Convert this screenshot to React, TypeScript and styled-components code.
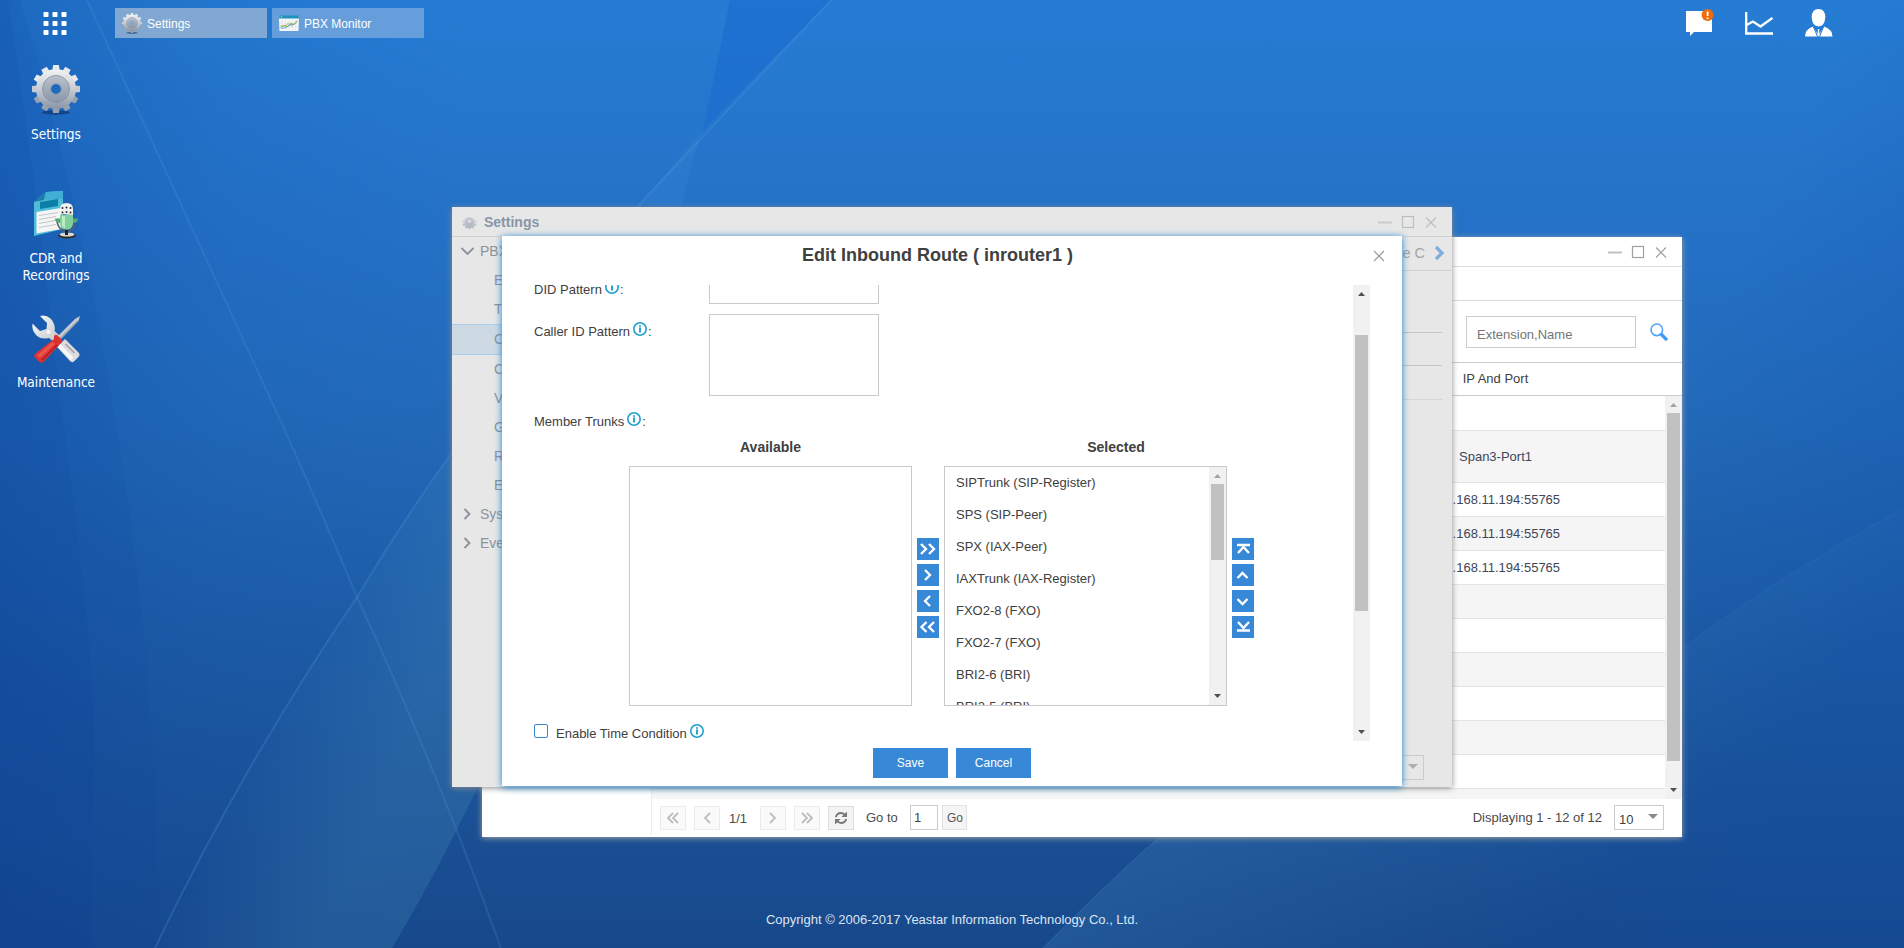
import React from "react";
import styled, { createGlobalStyle, css } from "styled-components";

const GlobalStyle = createGlobalStyle`
  * { box-sizing: border-box; }
  html, body { margin: 0; padding: 0; height: 100%; overflow: hidden; }
  body { font: 13px "Liberation Sans", Arial, sans-serif; color: #404040; }
`;

/* ---------- desktop ---------- */

const Desktop = styled.div`
  position: relative;
  width: 1904px;
  height: 948px;
  overflow: hidden;
  display: flex;
  flex-direction: column;
  background: #1e62b2;
`;

const Wallpaper = styled.svg`
  position: absolute;
  inset: 0;
`;

const TaskBar = styled.header`
  position: relative;
  display: flex;
  align-items: flex-start;
  height: 38px;
  padding: 8px 71px 0 43px;
`;

const AppsIcon = styled.svg`
  margin: 4px 48px 0 0;
`;

const Task = styled.div<{ $active?: boolean }>`
  display: flex;
  align-items: center;
  width: 152px;
  height: 30px;
  margin-right: 5px;
  padding: 1px 0 0 7px;
  gap: 5px;
  font-size: 12px;
  color: #fff;
  background: ${(p) => (p.$active ? "#80a8d2" : "#669edb")};
`;

const Tray = styled.div`
  display: flex;
  gap: 32px;
  margin-left: auto;
`;

const Shortcuts = styled.nav`
  position: relative;
  display: flex;
  flex-direction: column;
  width: 112px;
  padding-top: 27px;
  flex: 1;
`;

const Shortcut = styled.div`
  display: flex;
  flex-direction: column;
  align-items: center;
  height: 124px;
  color: #fff;
  text-align: center;
  font: 13.5px/17px "DejaVu Sans Condensed", "DejaVu Sans", sans-serif;
`;

const ShortcutLabel = styled.span`
  width: 92px;
  margin-top: 11px;
`;

const Copyright = styled.footer`
  position: relative;
  height: 58px;
  line-height: 60px;
  text-align: center;
  color: #dbe5f1;
`;

/* ---------- windows ---------- */

const Frame = styled.section<{ $x: number; $y: number; $w: number; $h: number; $muted?: boolean }>`
  position: absolute;
  left: ${(p) => p.$x}px;
  top: ${(p) => p.$y}px;
  width: ${(p) => p.$w}px;
  height: ${(p) => p.$h}px;
  display: flex;
  flex-direction: column;
  background: ${(p) => (p.$muted ? "#e7e7e7" : "#fff")};
  box-shadow: 0 1px 6px ${(p) => (p.$muted ? "#8b8b8b" : "#a2a2a2")};
`;

const TitleBar = styled.div<{ $muted?: boolean }>`
  display: flex;
  align-items: center;
  height: 30px;
  padding: 0 15px 0 10px;
  border-bottom: 1px solid ${(p) => (p.$muted ? "#d0d0d0" : "#dcdcdc")};
  flex: none;
`;

const TitleText = styled.b`
  margin-left: 7px;
  font-size: 14px;
  color: #8795a8;
`;

const Controls = styled.svg`
  margin-left: auto;
`;

const WindowBody = styled.div`
  display: flex;
  flex: 1;
  min-height: 0;
`;

/* PBX monitor */

const MonitorNav = styled.div`
  width: 170px;
  margin-bottom: 2px;
  border-right: 1px solid #ececec;
`;

const MonitorMain = styled.div`
  display: flex;
  flex-direction: column;
  flex: 1;
`;

const TabStrip = styled.div`
  height: 34px;
  border-bottom: 1px solid #dcdcdc;
`;

const SearchBar = styled.div`
  display: flex;
  justify-content: flex-end;
  height: 62px;
  padding: 15px 14px 0 0;
  gap: 14px;
  border-bottom: 1px solid #ccc;
`;

const SearchInput = styled.div`
  width: 170px;
  height: 32px;
  padding: 2px 0 0 10px;
  border: 1px solid #ccc;
  line-height: 32px;
  color: #757575;
`;

const SearchIcon = styled.svg`
  margin-top: 7px;
`;

const ColumnHeader = styled.div`
  height: 33px;
  padding: 0 17px 1px 0;
  border-bottom: 1px solid #ccc;
  display: flex;
  justify-content: flex-end;
  align-items: center;
`;

const Grid = styled.div`
  display: flex;
  height: 403px;
`;

const GridRows = styled.div`
  flex: 1;
  overflow: hidden;
`;

const GridRow = styled.div<{ $h: number; $alt: boolean }>`
  display: flex;
  justify-content: flex-end;
  align-items: center;
  height: ${(p) => p.$h}px;
  border-bottom: 1px solid #e3e3e3;
  background: ${(p) => (p.$alt ? "#f5f5f5" : "#fff")};
  color: #3e4659;
`;

const PortCell = styled.span`
  width: 339px;
  text-align: center;
`;

const Pager = styled.div`
  display: flex;
  align-items: flex-start;
  height: 38px;
  padding: 7px 18px 0 8px;
`;

const PagerButton = styled.span<{ $enabled?: boolean }>`
  display: flex;
  align-items: center;
  justify-content: center;
  width: 26px;
  height: 24px;
  margin-right: 8px;
  border: 1px solid ${(p) => (p.$enabled ? "#ddd" : "#ececec")};
  background: ${(p) => (p.$enabled ? "#f3f3f3" : "#fafafa")};
`;

const PagerText = styled.span<{ $w: number; $top?: number; $left?: number }>`
  width: ${(p) => p.$w}px;
  padding-top: ${(p) => p.$top ?? 0}px;
  padding-left: ${(p) => p.$left ?? 0}px;
  line-height: 24px;
  white-space: nowrap;
  color: #4a4a4a;
`;

const PageInput = styled.span`
  width: 28px;
  height: 25px;
  margin: -1px 4px 0 0;
  padding-left: 3px;
  border: 1px solid #ccc;
  line-height: 24px;
`;

const GoButton = styled.span`
  width: 25px;
  height: 25px;
  margin-top: -1px;
  padding-left: 1px;
  border: 1px solid #e3e3e3;
  background: #f5f5f5;
  font-size: 12px;
  line-height: 25px;
  text-align: center;
  color: #555;
`;

const PageTotal = styled.span`
  margin-left: auto;
  margin-right: 12px;
  line-height: 23px;
  color: #4a4a4a;
`;

const PageSize = styled.span`
  display: flex;
  justify-content: space-between;
  width: 50px;
  height: 25px;
  margin-top: -1px;
  padding: 0 4px;
  border: 1px solid #ccc;
  line-height: 27px;
`;

const Caret = styled.i<{ $muted?: boolean }>`
  margin: 8px 1px 0 auto;
  width: 10px;
  height: 5px;
  background: ${(p) => (p.$muted ? "#b0b0b0" : "#8a8a8a")};
  clip-path: polygon(0 0, 100% 0, 50% 100%);
`;

/* settings window */

const MenuTree = styled.nav`
  width: 200px;
`;

const MenuItem = styled.div<{ $level: number; $active?: boolean }>`
  display: flex;
  align-items: center;
  height: ${(p) => (p.$active ? 31 : 29)}px;
  padding-left: ${(p) => (p.$level ? 42 : 8)}px;
  padding-bottom: 2px;
  font-size: 14px;
  color: #8d929b;
  ${(p) =>
    p.$active &&
    css`
      background: #cddae4;
      border-top: 1px solid #a9cde9;
      border-bottom: 1px solid #a9cde9;
    `}
`;

const MenuArrow = styled.svg`
  margin-right: 5px;
`;

const SettingsMain = styled.div`
  flex: 1;
  display: flex;
  flex-direction: column;
`;

const SettingsTabs = styled.div`
  display: flex;
  justify-content: flex-end;
  align-items: center;
  height: 34px;
  padding: 0 7px 1px 0;
  border-bottom: 1px solid #d0d0d0;
  font-size: 14.5px;
  color: #a3a3a3;
`;

const TabChevron = styled.svg`
  margin-left: 9px;
`;

const SettingsRule = styled.div<{ $h: number; $light?: boolean }>`
  height: ${(p) => p.$h}px;
  margin-right: 10px;
  border-bottom: 1px solid ${(p) => (p.$light ? "#d6d6d6" : "#c6c6c6")};
`;

const SettingsFooter = styled.div`
  display: flex;
  justify-content: flex-end;
  margin-top: auto;
  padding: 0 28px 7px 0;
`;

/* dialog */

const Dialog = styled.section`
  position: absolute;
  left: 502px;
  top: 236px;
  width: 900px;
  height: 550px;
  display: flex;
  flex-direction: column;
  background: #fff;
  box-shadow: 0 1px 7px #1b80cc;
`;

const DialogHeader = styled.header`
  display: flex;
  height: 49px;
  padding-right: 17px;
  flex: none;
`;

const DialogTitle = styled.h1`
  flex: 1;
  margin: 0;
  font-size: 18px;
  line-height: 39px;
  text-align: center;
  color: #404040;
`;

const DialogBody = styled.div`
  display: flex;
  height: 456px;
  padding: 0 32px;
  overflow: hidden;
`;

const Form = styled.div`
  flex: 1;
  margin-top: -13px;
`;

const Field = styled.div<{ $gap: number }>`
  display: flex;
  align-items: flex-start;
  margin-bottom: ${(p) => p.$gap}px;
`;

const Label = styled.label`
  width: 175px;
  height: 35px;
  line-height: 35px;
  white-space: nowrap;
`;

const InfoSvg = styled.svg`
  margin: 0 1px 0 3px;
  vertical-align: baseline;
`;

const TextBox = styled.div<{ $h: number }>`
  width: 170px;
  height: ${(p) => p.$h}px;
  border: 1px solid #c9c9c9;
`;

const ListTitles = styled.div`
  display: flex;
  gap: 32px;
  padding-left: 95px;
  margin-bottom: 11px;
`;

const ListTitle = styled.b<{ $w: number }>`
  width: ${(p) => p.$w}px;
  font-size: 14px;
  line-height: 16px;
  text-align: center;
`;

const Transfer = styled.div`
  display: flex;
  gap: 5px;
  padding-left: 95px;
  margin-bottom: 10px;
`;

const ListBox = styled.div`
  display: flex;
  width: 283px;
  height: 240px;
  border: 1px solid #c9c9c9;
`;

const ListItems = styled.div`
  flex: 1;
  overflow: hidden;
`;

const ListItem = styled.div`
  height: 32px;
  padding-left: 11px;
  line-height: 32px;
`;

const MoveColumn = styled.div`
  display: flex;
  flex-direction: column;
  gap: 4px;
  padding-top: 72px;
`;

const MoveButton = styled.span`
  width: 22px;
  height: 22px;
  background: #3789d8;

  svg {
    display: block;
  }
`;

const CheckBox = styled.i`
  display: inline-block;
  width: 14px;
  height: 14px;
  margin-right: 8px;
  border: 1px solid #3789d8;
  border-radius: 2px;
  vertical-align: baseline;
`;

const DialogFooter = styled.footer`
  display: flex;
  justify-content: center;
  gap: 8px;
  padding-top: 7px;
`;

const Button = styled.button`
  width: 75px;
  height: 30px;
  padding: 0;
  border: 0;
  font: 12px "Liberation Sans", Arial, sans-serif;
  color: #fff;
  background: #3789d8;
`;

/* scroll bar */

const Track = styled.div`
  display: flex;
  flex-direction: column;
  width: 17px;
  flex: none;
  background: #f1f1f1;
`;

const TrackArrow = styled.i<{ $down?: boolean; $idle?: boolean }>`
  width: 7px;
  height: 4px;
  margin: ${(p) => (p.$down ? "auto 5px 7px" : "7px 5px 6px")};
  background: ${(p) => (p.$idle ? "#a3a3a3" : "#505050")};
  clip-path: ${(p) => (p.$down ? "polygon(0 0, 100% 0, 50% 100%)" : "polygon(0 100%, 100% 100%, 50% 0)")};
`;

const Thumb = styled.div<{ $start: number; $len: number }>`
  width: 13px;
  height: ${(p) => p.$len}px;
  margin: ${(p) => p.$start}px 2px 0;
  background: #c1c1c1;
`;

const ScrollBar = ({ start, len }: { start: number; len: number }) => (
  <Track>
    <TrackArrow $idle={start === 0} />
    <Thumb $start={start} $len={len} />
    <TrackArrow $down />
  </Track>
);

/* ---------- drawings ---------- */

const Background = () => (
  <Wallpaper width="1904" height="948" viewBox="0 0 1904 948">
    <defs>
      <linearGradient id="sky" x1="0" y1="0" x2="0" y2="1">
        <stop offset="0" stopColor="#267cd3" />
        <stop offset="0.22" stopColor="#2472c8" />
        <stop offset="0.45" stopColor="#2269b8" />
        <stop offset="0.68" stopColor="#1d5aa4" />
        <stop offset="0.88" stopColor="#1a4f94" />
        <stop offset="1" stopColor="#17488b" />
      </linearGradient>
      <linearGradient id="leftShade" x1="0" y1="0" x2="1" y2="0">
        <stop offset="0" stopColor="#0a4398" stopOpacity="0.34" />
        <stop offset="0.5" stopColor="#0f50a8" stopOpacity="0.12" />
        <stop offset="1" stopColor="#0f55b0" stopOpacity="0" />
      </linearGradient>
      <linearGradient id="beam" gradientUnits="userSpaceOnUse" x1="290" y1="650" x2="420" y2="705">
        <stop offset="0" stopColor="#4a93bd" stopOpacity="0.01" />
        <stop offset="1" stopColor="#4a93bd" stopOpacity="0.24" />
      </linearGradient>
      <linearGradient id="rightBeam" gradientUnits="userSpaceOnUse" x1="1250" y1="740" x2="1480" y2="1000">
        <stop offset="0" stopColor="#3f85bd" stopOpacity="0.26" />
        <stop offset="1" stopColor="#3f85bd" stopOpacity="0" />
      </linearGradient>
      <linearGradient id="edge" gradientUnits="userSpaceOnUse" x1="1660" y1="430" x2="1900" y2="540">
        <stop offset="0" stopColor="#0d4ea6" stopOpacity="0" />
        <stop offset="1" stopColor="#0d4ea6" stopOpacity="0.26" />
      </linearGradient>
    </defs>
    <rect width="1904" height="948" fill="url(#sky)" />
    <rect width="460" height="948" fill="url(#leftShade)" />
    <rect x="1400" width="504" height="948" fill="url(#edge)" />
    <path d="M0 0H8Q40 210 60 400Q95 650 95 760L89 948H0Z" fill="#0a3c98" fillOpacity="0.09" />
    <path d="M0 0H20Q80 200 112 400Q160 680 158 948H0Z" fill="#0a3c98" fillOpacity="0.08" />
    <path d="M730 0H831L703 130Q718 60 730 0Z" fill="#1868cf" fillOpacity="0.5" />
    <path d="M703 130L639 205H682Q690 165 703 130Z" fill="#3a8bd4" fillOpacity="0.22" />
    <path d="M448 458Q400 525 357 597Q240 770 155 948H392Q430 885 476 791V458Z" fill="url(#beam)" />
    <path d="M831 0L639 205L448 458Q400 525 357 597Q240 770 155 948" fill="none" stroke="#5aa0dd" strokeOpacity="0.24" strokeWidth="2" />
    <path d="M87 0L271 400Q310 485 357 597Q435 765 501 948" fill="none" stroke="#5aa0dd" strokeOpacity="0.2" strokeWidth="2" />
    <path d="M1904 508Q1790 570 1692 641Q1400 770 1159 837Q1095 895 1043 948H1904Z" fill="url(#rightBeam)" />
    <path d="M1904 508Q1790 570 1692 641" fill="none" stroke="#5aa0dd" strokeOpacity="0.12" />
    <path d="M1159 837Q1095 895 1043 948" fill="none" stroke="#5aa0dd" strokeOpacity="0.24" />
  </Wallpaper>
);

const GearIcon = ({ size, faded }: { size: number; faded?: boolean }) => (
  <svg width={size} height={(size * 50) / 48} viewBox="0 0 48 50" opacity={faded ? 0.6 : 1}>
    <defs>
      <linearGradient id="gearOuter" x1="0" y1="0" x2="0" y2="1">
        <stop offset="0" stopColor="#f2f2f2" />
        <stop offset="0.5" stopColor="#c9ced5" />
        <stop offset="1" stopColor="#8894a4" />
      </linearGradient>
      <linearGradient id="gearInner" x1="0" y1="0" x2="0" y2="1">
        <stop offset="0" stopColor="#b9c1cb" />
        <stop offset="1" stopColor="#8a97a9" />
      </linearGradient>
    </defs>
    {!faded && <ellipse cx="24" cy="47.500" rx="14" ry="2.200" fill="#0b2f66" fillOpacity="0.6" />}
    {Array.from({ length: 12 }, (_, i) => (
      <path
        key={i}
        d="M20.300 7L21 0H27L27.700 7Z"
        fill={i < 3 || i > 9 ? "#e6e8ea" : i === 3 || i === 9 ? "#c6ccd2" : "#97a1af"}
        transform={`rotate(${i * 30} 24 24)`}
      />
    ))}
    <path fillRule="evenodd" d="M24 4a20 20 0 1 0 .01 0ZM24 18.800a5.200 5.200 0 1 1-.01 0Z" fill="url(#gearOuter)" />
    <path
      fillRule="evenodd"
      d="M24 10.500a13.500 13.500 0 1 0 .01 0ZM24 18.800a5.200 5.200 0 1 1-.01 0Z"
      fill="url(#gearInner)"
      stroke="#8391a4"
      strokeWidth="0.800"
    />
  </svg>
);

const MonitorIcon = () => (
  <svg width="20" height="17" viewBox="0.500 0 21 17" preserveAspectRatio="none">
    <rect x="1" y="0.500" width="20" height="5" rx="1" fill="#1f92c0" />
    <circle cx="3" cy="1.800" r="0.900" fill="#8bd36a" />
    <path d="M0.500 3.500H21.500L21 16H1Z" fill="#f4f6f7" />
    <path d="M4 5v10M7.500 5v10M11 5v10M14.500 5v10M18 5v10M2 8h18M2 12h18" stroke="#dde2e4" strokeWidth="0.700" />
    <path d="M2 12.500l4-2 3 1 4-3 3 1 4-4" fill="none" stroke="#58b56a" />
    <path d="M2 10.500l4 1 4-3 4 2 5-3" fill="none" stroke="#e0a23c" strokeWidth="0.900" />
    <path d="M3 13.500l5-1 4-2.500 5-1" fill="none" stroke="#3fa3d4" strokeWidth="0.800" />
  </svg>
);

const RecordingsIcon = () => (
  <svg width="48" height="50" viewBox="0 -1 48 50" overflow="visible">
    <path d="M2 12L14 2L31 1V39L2 46Z" fill="#4fbcd8" />
    <path d="M2 12L14 2L12 10Z" fill="#1d7eae" />
    <path d="M14 2L31 1V9L12 10Z" fill="#3fb0d3" />
    <path d="M8 12L26 9V16L8 19Z" fill="#0b7fa6" />
    <path d="M4.500 22L29 18V39L4.500 43.500Z" fill="#f5f5f5" />
    <path d="M7 25.500l19-3M7 29.500l17-3M7 33.500l16-3M7 37.500l17-3" stroke="#c4c7c9" strokeWidth="1.200" />
    <ellipse cx="35" cy="45.500" rx="9" ry="3" fill="#2d2d2d" />
    <ellipse cx="35" cy="44.500" rx="7.500" ry="2" fill="#d7d7d7" />
    <path d="M25 32Q27 41 34.500 41T44 32" fill="none" stroke="#57616a" strokeWidth="1.500" />
    <path d="M34.500 40v5" stroke="#222" strokeWidth="3" />
    <path d="M28 24V19Q28 13 34.500 13T41 19V25Z" fill="#f1f1f1" />
    <g fill="#2b2b2b">
      <circle cx="30.500" cy="18" r="1" />
      <circle cx="34.500" cy="17.500" r="1" />
      <circle cx="38.500" cy="18" r="1" />
      <circle cx="30.500" cy="22.500" r="1" />
      <circle cx="34.500" cy="22" r="1" />
      <circle cx="38.500" cy="22.500" r="1" />
    </g>
    <path d="M28 25H41V34Q40 39.500 34.500 39.500T28 34Z" fill="#82cf9b" />
    <path d="M23 28.500H28V33Q23 33 23 28.500ZM41 28.500H46Q46 33 41 33Z" fill="#52a777" />
    <path d="M30 26h3v12q-3-1-3-4Z" fill="#bdecc4" />
  </svg>
);

const ToolsIcon = () => (
  <svg width="48" height="50" viewBox="0 -2 48 50" overflow="visible">
    <defs>
      <linearGradient id="steel" x1="0" y1="0" x2="1" y2="1">
        <stop offset="0" stopColor="#fbfbfb" />
        <stop offset="1" stopColor="#bfc3c7" />
      </linearGradient>
    </defs>
    <path d="M8 1Q14 -0.500 18.500 3.500Q24 9 22.500 16L28 21L22 27L17 23Q9 25 4 20Q-0.500 15 0.500 8.500L8 16L14.500 14L15 8Z" fill="url(#steel)" />
    <circle cx="16.500" cy="17" r="2" fill="#f7f7f7" />
    <path d="M25 32L33 24L47 38Q48.500 40 46.500 42L42 46.500Q40 48 38 46Z" fill="#dcdcdf" />
    <path d="M28 29L41.500 42.500L38.500 45L26 32Z" fill="#f7f7f7" />
    <path d="M33.500 29l9 9" stroke="#a2a2a6" strokeWidth="1.600" />
    <path d="M26 21L43 4L48 1L46.500 6L29 24Z" fill="#c9cdd1" />
    <path d="M28.500 23L46 5.500" stroke="#80868c" strokeWidth="1" />
    <path d="M22 21Q24 18.500 26 21L30 25Q31 27.500 28 29L12 46.500Q9.500 49 7 46.500L2.500 42Q1.500 40 3.500 38.500L22 24Z" fill="#dd3330" />
    <path d="M20 27L5 40.500L8 43L23 29Z" fill="#ea544c" />
    <path d="M25 30L10 45" stroke="#a71d1f" strokeWidth="1.200" />
  </svg>
);

const WindowControls = ({ muted }: { muted?: boolean }) => (
  <Controls width="60" height="14" viewBox="0 0 60 14" fill="none" stroke={muted ? "#bdbdbd" : "#a0a0a0"}>
    <path d="M1 7.500H15" stroke={muted ? "#cbcbcb" : "#c0c0c0"} strokeWidth="2" />
    <rect x="25.500" y="1.500" width="11" height="11" strokeWidth="1.200" />
    <path d="M49 2.500L59 12.500M59 2.500L49 12.500" strokeWidth="1.200" />
  </Controls>
);

const InfoIcon = () => (
  <InfoSvg width="14" height="14" viewBox="0 0 14 14">
    <circle cx="7" cy="7" r="6.200" fill="none" stroke="#1fa0cf" strokeWidth="1.600" />
    <path d="M7 3.200v1.600M7 5.600v5" stroke="#1fa0cf" strokeWidth="1.900" />
  </InfoSvg>
);

const MoveIcon = ({ d }: { d: string }) => (
  <MoveButton>
    <svg width="22" height="22" viewBox="0 0 22 22">
      <path d={d} fill="none" stroke="#fff" strokeWidth="2.300" />
    </svg>
  </MoveButton>
);

const PagerIcon = ({ d }: { d: string }) => (
  <svg width="14" height="14" viewBox="0 0 14 14">
    <path d={d} fill="none" stroke="#bdbdbd" strokeWidth="1.800" />
  </svg>
);

/* ---------- data ---------- */

const trunks = [
  "SIPTrunk (SIP-Register)",
  "SPS (SIP-Peer)",
  "SPX (IAX-Peer)",
  "IAXTrunk (IAX-Register)",
  "FXO2-8 (FXO)",
  "FXO2-7 (FXO)",
  "BRI2-6 (BRI)",
  "BRI2-5 (BRI)",
];

const ports = ["", "Span3-Port1", "192.168.11.194:55765", "192.168.11.194:55765", "192.168.11.194:55765", "", "", "", "", "", "", ""];

const menu = [
  { text: "PBX", level: 0, open: true },
  { text: "E", level: 1 },
  { text: "T", level: 1 },
  { text: "C", level: 1, active: true },
  { text: "C", level: 1 },
  { text: "V", level: 1 },
  { text: "G", level: 1 },
  { text: "R", level: 1 },
  { text: "E", level: 1 },
  { text: "Sys", level: 0 },
  { text: "Eve", level: 0 },
];

/* ---------- panels ---------- */

const PbxMonitor = () => (
  <Frame $x={482} $y={237} $w={1200} $h={600}>
    <TitleBar>
      <WindowControls />
    </TitleBar>
    <WindowBody>
      <MonitorNav />
      <MonitorMain>
        <TabStrip />
        <SearchBar>
          <SearchInput>Extension,Name</SearchInput>
          <SearchIcon width="18" height="19" viewBox="0 0 18 19">
            <circle cx="6.800" cy="6.800" r="5.800" fill="none" stroke="#4da3ff" strokeWidth="1.600" />
            <path d="M11 11L17 17" stroke="#4299f5" strokeWidth="3.200" />
          </SearchIcon>
        </SearchBar>
        <ColumnHeader>
          <PortCell>IP And Port</PortCell>
        </ColumnHeader>
        <Grid>
          <GridRows>
            {ports.map((port, i) => (
              <GridRow key={i} $h={i === 0 ? 35 : i === 1 ? 52 : 34} $alt={i % 2 === 1}>
                <PortCell>{port}</PortCell>
              </GridRow>
            ))}
          </GridRows>
          <ScrollBar start={0} len={348} />
        </Grid>
        <Pager>
          <PagerButton><PagerIcon d="M7 2L2 7L7 12M12 2L7 7L12 12" /></PagerButton>
          <PagerButton><PagerIcon d="M10 2L5 7L10 12" /></PagerButton>
          <PagerText $w={32} $top={1} $left={1}>1/1</PagerText>
          <PagerButton><PagerIcon d="M4 2L9 7L4 12" /></PagerButton>
          <PagerButton><PagerIcon d="M2 2L7 7L2 12M7 2L12 7L7 12" /></PagerButton>
          <PagerButton $enabled>
            <svg width="14" height="14" viewBox="0 0 14 14" fill="none" stroke="#777" strokeWidth="2">
              <path d="M1.800 6Q3 2 7 2Q9.500 2 11.500 4.500M12.200 8Q11 12 7 12Q4.500 12 2.500 9.500" />
              <path d="M13 0.500V6H7.500ZM1 13.500V8H6.500Z" fill="#777" stroke="none" />
            </svg>
          </PagerButton>
          <PagerText $w={48} $left={4}>Go to</PagerText>
          <PageInput>1</PageInput>
          <GoButton>Go</GoButton>
          <PageTotal>Displaying 1 - 12 of 12</PageTotal>
          <PageSize>10<Caret /></PageSize>
        </Pager>
      </MonitorMain>
    </WindowBody>
  </Frame>
);

const SettingsWindow = () => (
  <Frame $x={452} $y={207} $w={1000} $h={580} $muted>
    <TitleBar $muted>
      <GearIcon size={15} faded />
      <TitleText>Settings</TitleText>
      <WindowControls muted />
    </TitleBar>
    <WindowBody>
      <MenuTree>
        {menu.map((item, i) => (
          <MenuItem key={i} $level={item.level} $active={item.active}>
            {item.level === 0 && (
              <MenuArrow width="15" height="14" viewBox="0 0 15 14">
                <path
                  d={item.open ? "M1.500 4L7.500 10L13.500 4" : "M4.500 2L9.500 7L4.500 12"}
                  fill="none"
                  stroke="#8a9099"
                  strokeWidth="1.800"
                />
              </MenuArrow>
            )}
            {item.text}
          </MenuItem>
        ))}
      </MenuTree>
      <SettingsMain>
        <SettingsTabs>
          e C
          <TabChevron width="11" height="16" viewBox="0 0 11 16">
            <path d="M2 2L8 8L2 14" fill="none" stroke="#7fadde" strokeWidth="3.200" />
          </TabChevron>
        </SettingsTabs>
        <SettingsRule $h={62} />
        <SettingsRule $h={33} />
        <SettingsRule $h={34} $light />
        <SettingsFooter>
          <PageSize><Caret $muted /></PageSize>
        </SettingsFooter>
      </SettingsMain>
    </WindowBody>
  </Frame>
);

const RouteDialog = () => (
  <Dialog>
    <DialogHeader>
      <DialogTitle>Edit Inbound Route ( inrouter1 )</DialogTitle>
      <svg width="12" height="40" viewBox="0 0 12 40">
        <path d="M1 15L11 25M11 15L1 25" stroke="#9a9a9a" strokeWidth="1.200" />
      </svg>
    </DialogHeader>
    <DialogBody>
      <Form>
        <Field $gap={7}>
          <Label>DID Pattern<InfoIcon />:</Label>
          <TextBox $h={32} />
        </Field>
        <Field $gap={8}>
          <Label>Caller ID Pattern<InfoIcon />:</Label>
          <TextBox $h={82} />
        </Field>
        <Label as="div">Member Trunks<InfoIcon />:</Label>
        <ListTitles>
          <ListTitle $w={283}>Available</ListTitle>
          <ListTitle $w={344}>Selected</ListTitle>
        </ListTitles>
        <Transfer>
          <ListBox />
          <MoveColumn>
            <MoveIcon d="M4 6L9 11L4 16M12 6L17 11L12 16" />
            <MoveIcon d="M8 6L13 11L8 16" />
            <MoveIcon d="M13 6L8 11L13 16" />
            <MoveIcon d="M9.500 6L4.500 11L9.500 16M17 6L12 11L17 16" />
          </MoveColumn>
          <ListBox>
            <ListItems>
              {trunks.map((t) => (
                <ListItem key={t}>{t}</ListItem>
              ))}
            </ListItems>
            <ScrollBar start={0} len={76} />
          </ListBox>
          <MoveColumn>
            <MoveIcon d="M5 7H18M6 15L11.500 9L17 15" />
            <MoveIcon d="M5.500 14L10.500 9L15.500 14" />
            <MoveIcon d="M5.500 9L10.500 14L15.500 9" />
            <MoveIcon d="M5 14.500H18M6 6L11.500 12L17 6" />
          </MoveColumn>
        </Transfer>
        <Label as="div"><CheckBox />Enable Time Condition<InfoIcon /></Label>
      </Form>
      <ScrollBar start={33} len={276} />
    </DialogBody>
    <DialogFooter>
      <Button>Save</Button>
      <Button>Cancel</Button>
    </DialogFooter>
  </Dialog>
);

export default function App() {
  return (
    <>
      <GlobalStyle />
      <Desktop>
        <Background />
        <TaskBar>
          <AppsIcon width="24" height="23" viewBox="0 0 24 23" fill="#fff">
            {[0, 9, 18].map((y) =>
              [0.5, 9.5, 18.5].map((x) => <rect key={`${x}-${y}`} x={x} y={y} width="5" height="5" rx="0.800" />)
            )}
          </AppsIcon>
          <Task $active><GearIcon size={20} />Settings</Task>
          <Task><MonitorIcon />PBX Monitor</Task>
          <Tray>
            <svg width="27" height="30" viewBox="0 0 27 30" overflow="visible">
              <path d="M0 3H26V24H8L4 28V24H0Z" fill="#fff" />
              <circle cx="21.600" cy="7" r="6" fill="#f06c0a" />
              <path d="M21.600 3.500V8M21.600 9.500V11" stroke="#fff" strokeWidth="1.800" />
            </svg>
            <svg width="28" height="30" viewBox="0 0 28 30" fill="none" stroke="#fff" strokeWidth="2.300">
              <path d="M1.200 4V25.500H28M1.500 17L8 13.500L15.500 18.500L27.500 10" />
            </svg>
            <svg width="28" height="30" viewBox="0 0 28 30">
              <path d="M13.500 1Q20 1 20.300 9Q20 18 13.500 18.500Q7 18 6.700 9Q7 1 13.500 1Z" fill="#fff" />
              <path d="M0 28.500Q0 21.500 8 18.500L13.500 27L19 18.500Q27.500 21.500 27.500 28.500Z" fill="#fff" />
              <path d="M8.500 19L12.500 28.500M18.500 19L14.500 28.500" stroke="#2678cf" />
              <path d="M12 21H15L14.300 23L15.300 27L13.500 28.500L11.700 27L12.700 23Z" fill="#fff" stroke="#2678cf" strokeWidth="0.600" />
            </svg>
          </Tray>
        </TaskBar>
        <Shortcuts>
          <Shortcut><GearIcon size={48} /><ShortcutLabel>Settings</ShortcutLabel></Shortcut>
          <Shortcut><RecordingsIcon /><ShortcutLabel>CDR and Recordings</ShortcutLabel></Shortcut>
          <Shortcut><ToolsIcon /><ShortcutLabel>Maintenance</ShortcutLabel></Shortcut>
        </Shortcuts>
        <Copyright>Copyright © 2006-2017 Yeastar Information Technology Co., Ltd.</Copyright>
        <PbxMonitor />
        <SettingsWindow />
        <RouteDialog />
      </Desktop>
    </>
  );
}
